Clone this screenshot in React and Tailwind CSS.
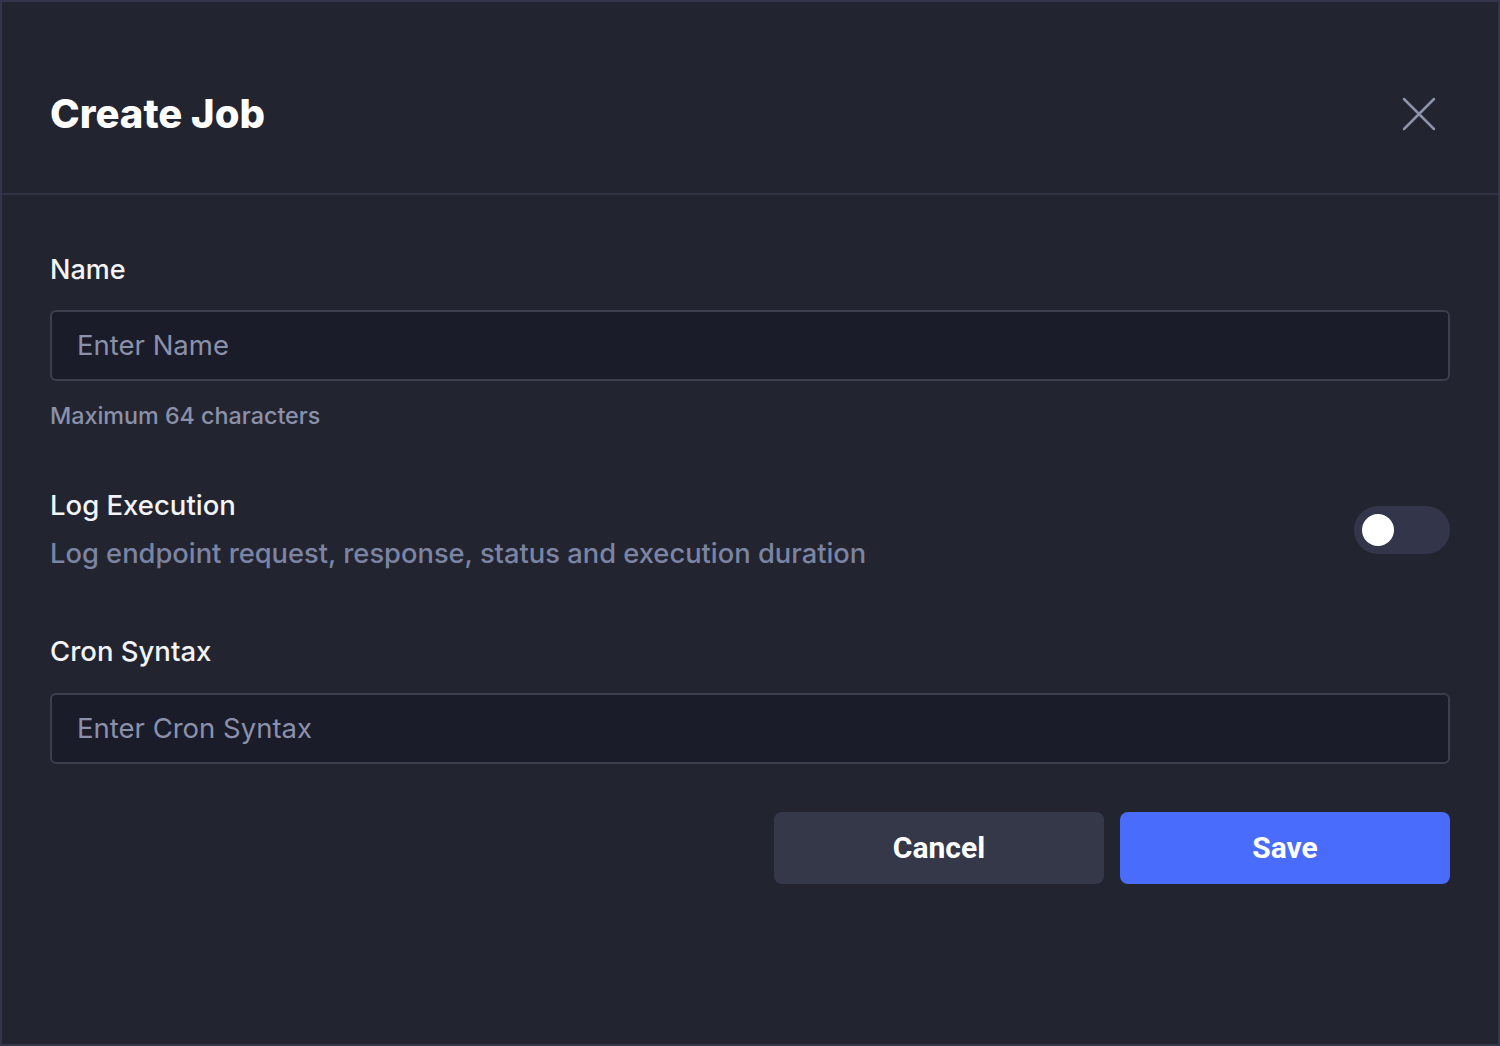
import React, { useState } from "react";

const body = { fontFamily: "Inter, 'Noto Sans', sans-serif" };

export default function App() {
  const [logOn, setLogOn] = useState(false);

  return (
    <div className="h-[1046px] w-[1500px] border-2 border-[#33364b] bg-[#222530] text-white" style={body}>
      <header className="flex h-[193px] items-center justify-between border-b-2 border-[#2f3244] pl-[48px] pr-[62px] pt-[32px]">
        <h1 className="text-[40px] font-extrabold">Create Job</h1>
        <button className="text-[#8d93aa]" aria-label="Close">
          <svg width="34" height="34" viewBox="0 0 34 34" fill="none" stroke="currentColor" strokeWidth="2.5" strokeLinecap="round">
            <path d="M2 2L32 32M32 2L2 32" />
          </svg>
        </button>
      </header>

      <main className="px-[48px] pt-[55px]">
        <label className="block text-[27px] font-medium text-[#f3f4f8]">Name</label>
        <input
          placeholder="Enter Name"
          className="mt-[19px] h-[71px] w-full rounded-md border-2 border-[#3c3f4d] bg-[#1b1c29] px-[25px] text-[27.5px] text-white placeholder:text-[#8b91ab] outline-none"
        />
        <p className="mt-[18px] text-[23.3px] font-medium text-[#8b91ab]">Maximum 64 characters</p>

        <div className="mt-[52px] flex items-center justify-between">
          <div>
            <div className="text-[27.5px] font-medium text-[#f3f4f8]">Log Execution</div>
            <div className="mt-[7px] text-[27.3px] font-medium text-[#7c84a4]">
              Log endpoint request, response, status and execution duration
            </div>
          </div>
          <button
            onClick={() => setLogOn(!logOn)}
            className={`flex h-[48px] w-[96px] items-center rounded-full px-[8px] ${logOn ? "justify-end bg-[#4a6cfc]" : "justify-start bg-[#33364a]"}`}
          >
            <span className="h-[32px] w-[32px] rounded-full bg-white" />
          </button>
        </div>

        <label className="mt-[56px] block text-[27.5px] font-medium text-[#f3f4f8]">Cron Syntax</label>
        <input
          placeholder="Enter Cron Syntax"
          className="mt-[21px] h-[71px] w-full rounded-md border-2 border-[#3c3f4d] bg-[#1b1c29] px-[25px] text-[27.5px] text-white placeholder:text-[#8b91ab] outline-none"
        />

        <div className="mt-[48px] flex justify-end gap-[16px]" style={{ fontFamily: "Roboto, Inter, sans-serif" }}>
          <button className="h-[72px] w-[330px] rounded-lg bg-[#343849] text-[30px] font-bold">Cancel</button>
          <button className="h-[72px] w-[330px] rounded-lg bg-[#4a6cfc] text-[30px] font-bold">Save</button>
        </div>
      </main>
    </div>
  );
}
